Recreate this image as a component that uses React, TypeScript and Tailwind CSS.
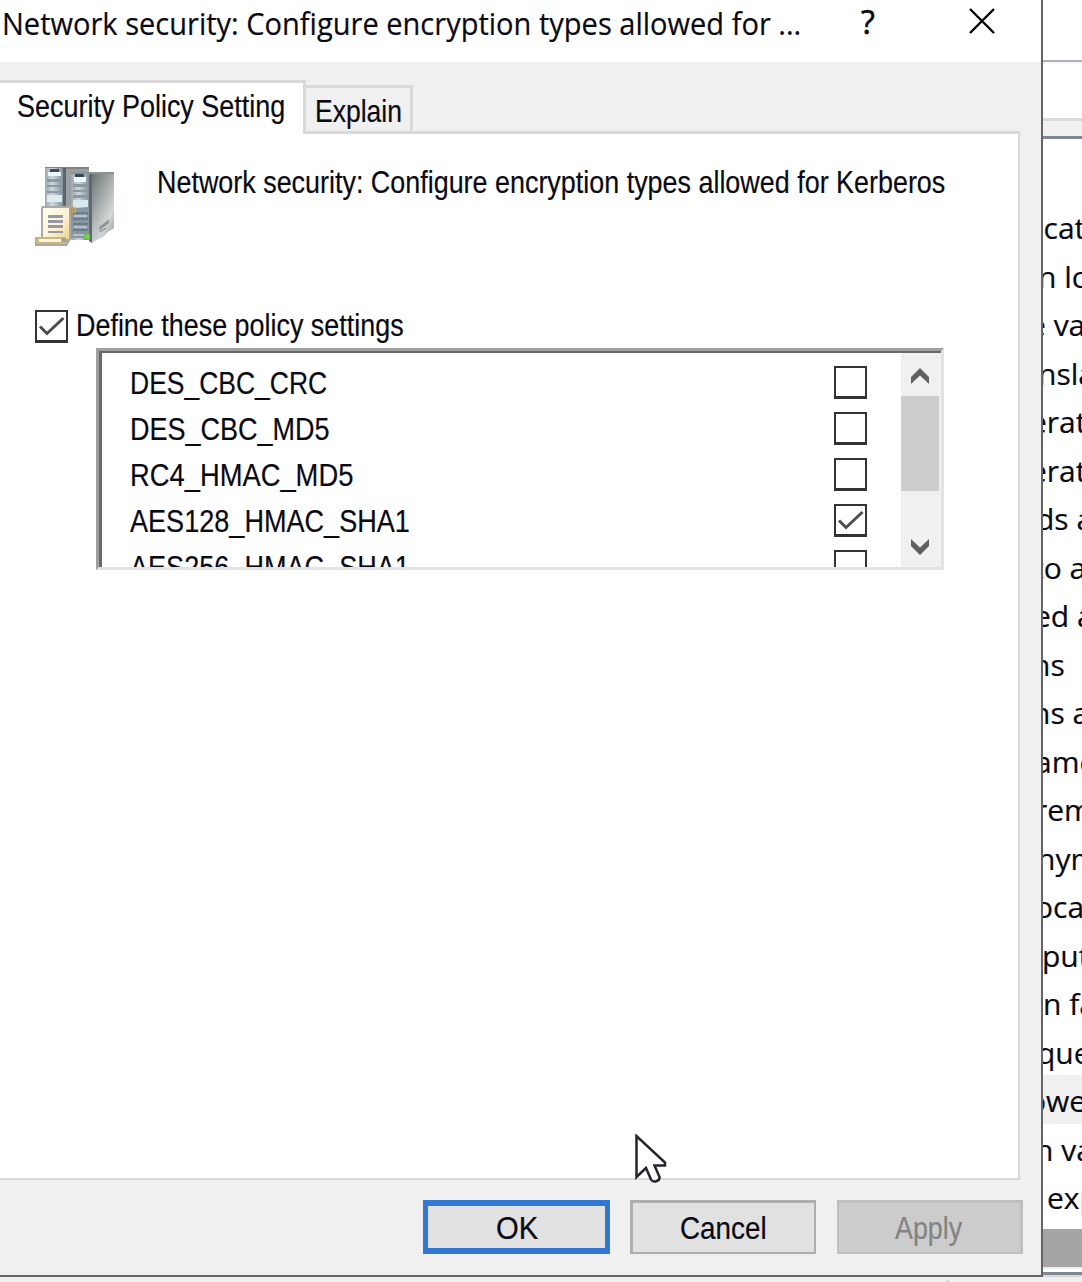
import React, { useLayoutEffect, useRef, useState } from "react";

/* Single-line label condensed horizontally to a given width. */
function Label({ text, width, className = "" }: { text: string; width: number; className?: string }) {
  const ref = useRef<HTMLSpanElement>(null);
  const [scale, setScale] = useState(1);
  useLayoutEffect(() => {
    if (ref.current) setScale(width / ref.current.offsetWidth);
  }, [text, width]);
  return (
    <span className={`block whitespace-pre ${className}`} style={{ width }}>
      <span ref={ref} className="inline-block origin-left" style={{ transform: `scaleX(${scale})` }}>
        {text}
      </span>
    </span>
  );
}

function CheckBox({ checked = false }: { checked?: boolean }) {
  return (
    <span className="block h-[33px] w-[33px] shrink-0 border-2 border-b-[3px] border-[#333] bg-white">
      {checked && (
        <svg viewBox="0 0 29 28" className="h-[28px] w-[29px]" fill="none">
          <path d="M3 14.5 L10 21.5 L26.5 6" stroke="#4d4d4d" strokeWidth="3" />
        </svg>
      )}
    </span>
  );
}

function ServerIcon() {
  return (
    <svg viewBox="0 0 79 79" className="h-[79px] w-[79px] shrink-0">
      <defs>
        <linearGradient id="side" x1="0" y1="0" x2="0.7" y2="1">
          <stop offset="0" stopColor="#68706f" />
          <stop offset="0.45" stopColor="#a3a9a9" />
          <stop offset="0.8" stopColor="#d5d7d7" />
          <stop offset="1" stopColor="#a9acac" />
        </linearGradient>
        <linearGradient id="face" x1="0" y1="0" x2="1" y2="0">
          <stop offset="0" stopColor="#9aa8b0" />
          <stop offset="0.4" stopColor="#cdd7dc" />
          <stop offset="1" stopColor="#84929b" />
        </linearGradient>
        <linearGradient id="paper" x1="0" y1="0" x2="1" y2="1">
          <stop offset="0" stopColor="#fffdf3" />
          <stop offset="0.55" stopColor="#fbf3d6" />
          <stop offset="1" stopColor="#eed58a" />
        </linearGradient>
      </defs>
      <path d="M10 0H54V40H10Z" fill="#7f8786" />
      <path d="M31 2H54V5H36V40H31Z" fill="#9aa09f" />
      <path d="M10 1H28V40H10Z" fill="url(#face)" />
      <path d="M28 1H31V40H28Z" fill="#59666e" />
      <path d="M15 2H24V5H15Z" fill="#3b4c54" />
      <path d="M13 5H26V9H13Z" fill="#eef7f9" />
      <path d="M12 12H27V15H12ZM12 18H27V20H12ZM12 24H27V26H12Z" fill="#8d98a0" />
      <path d="M12 28H27V35H12Z" fill="#dcecf0" />
      <path d="M56 5H79V61L73 65L68 70L62 73L56 76Z" fill="url(#side)" />
      <path d="M36 5H54V73H36Z" fill="url(#face)" />
      <path d="M54 5H57V76L54 74Z" fill="#5e6970" />
      <path d="M36 5H79V7H36Z" fill="#8b9493" />
      <path d="M40 7H49V10H40Z" fill="#344851" />
      <path d="M39 10H51V15H39Z" fill="#eef8fa" />
      <path d="M38 17H53V20H38ZM38 23H53V25H38ZM38 28H53V31H38Z" fill="#8c979f" />
      <path d="M38 33H53V40H38Z" fill="#d9e8ed" />
      <path d="M36 41H54V71H36Z" fill="#8997a3" />
      <path d="M38 45H53V47H38ZM38 51H53V53H38ZM38 56H53V58H38ZM38 62H53V64H38Z" fill="#6f7c8b" />
      <path d="M39 48H52V50H39ZM39 59H52V61H39ZM38 67H50V69H38Z" fill="#b5c1cb" />
      <path d="M49 67H55V73H49Z" fill="#72b45a" />
      <path d="M50 68H54V71H50Z" fill="#62ed14" />
      <path d="M64 60L74 52V56L64 64Z" fill="#999d9d" />
      <path d="M66 61L73 55M65 65L71 61" stroke="#8a9090" strokeWidth="1.4" />
      <path d="M7 39H38L41 42V46H36V72L32 79H0V70H6V41Z" fill="#aaa9a7" />
      <path d="M8 41H34V72H8Z" fill="url(#paper)" />
      <path d="M35 41H40V46H35Z" fill="#b29c66" />
      <path d="M13 48H28V51H13ZM13 53H28V56H13ZM13 58H28V61H13ZM13 64H28V66H13Z" fill="#9797a9" />
      <path d="M1 70H31V77H1Z" fill="#cbb57c" />
      <path d="M4 72H26V75H4Z" fill="#fff8df" />
      <path d="M27 71H31V75H27Z" fill="#a9a391" />
    </svg>
  );
}

function ScrollArrow({ down = false }: { down?: boolean }) {
  return (
    <svg viewBox="0 0 18 16" className={`h-4 w-[18px] ${down ? "rotate-180" : ""}`}>
      <path d="M9 0L18 9V16L9 7.5L0 16V9Z" fill="#606060" />
    </svg>
  );
}

const encryptionTypes = [
  { name: "DES_CBC_CRC", width: 197, checked: false },
  { name: "DES_CBC_MD5", width: 200, checked: false },
  { name: "RC4_HMAC_MD5", width: 223, checked: false },
  { name: "AES128_HMAC_SHA1", width: 280, checked: true },
  { name: "AES256_HMAC_SHA1", width: 280, checked: false },
];

/* Visible slice of the policy list behind the dialog: text and its horizontal shift. */
const policyRows = [
  { text: "icati", shift: "-ml-[7px]" },
  { text: "n loc", shift: "-ml-[5px]" },
  { text: "e val", shift: "-ml-[14px]" },
  { text: "nslat", shift: "-ml-[5px]" },
  { text: "erato", shift: "-ml-[13px]" },
  { text: "erato", shift: "-ml-[13px]" },
  { text: "ds an", shift: "-ml-[7px]" },
  { text: "to an", shift: "-ml-[10px]" },
  { text: "ed an", shift: "-ml-[9px]" },
  { text: "ns", shift: "-ml-[11px]" },
  { text: "ns an", shift: "-ml-[11px]" },
  { text: "ame", shift: "-ml-[8px]" },
  { text: "remo", shift: "-ml-[8px]" },
  { text: "nymo", shift: "-ml-[6px]" },
  { text: "ocal", shift: "-ml-[8px]" },
  { text: "pute", shift: "-ml-[1px]" },
  { text: "n fai", shift: "ml-0" },
  { text: "ques", shift: "-ml-[6px]" },
  { text: "owed", shift: "-ml-[15px]" },
  { text: "n val", shift: "-ml-[8px]" },
  { text: "expi", shift: "ml-[4px]" },
];

function TitleBar() {
  return (
    <div className="flex h-[62px] items-start bg-white font-['Open_Sans','Noto_Sans',sans-serif]">
      <Label text="Network security: Configure encryption types allowed for ..." width={799} className="ml-[2px] text-[31px] leading-[46px]" />
      <Label text="?" width={14} className="ml-[60px] text-[32px] leading-[43px] [-webkit-text-stroke:0.6px_currentColor]" />
      <svg viewBox="0 0 26 26" className="mt-2 ml-[94px] size-[26px]">
        <path d="M1 1L25 25M25 1L1 25" stroke="#000" strokeWidth="2.4" />
      </svg>
    </div>
  );
}

function Tabs() {
  return (
    <div className="relative z-10 flex h-[54px] items-start">
      <div className="h-[54px] w-[306px] border-t-[3px] border-r-[3px] border-[#d9d9d9] bg-white pl-[17px]">
        <Label text="Security Policy Setting" width={268} className="leading-[46px]" />
      </div>
      <div className="mt-[5px] h-[46px] w-[107px] border-t-[3px] border-r-[3px] border-[#d9d9d9] bg-[#f0f0f0] pl-[9px]">
        <Label text="Explain" width={87} className="leading-[46px]" />
      </div>
    </div>
  );
}

function EncryptionList() {
  return (
    <div className="ml-[96px] flex h-[222px] w-[848px] border-[3px] border-t-[#a0a0a0] border-r-[#e3e3e3] border-b-[#e3e3e3] border-l-[#a0a0a0]">
      <div className="flex h-full w-full overflow-hidden border-t-2 border-l-[3px] border-[#696969]">
        <div className="h-full flex-1 overflow-hidden pt-[7px]">
          {encryptionTypes.map((t) => (
            <div key={t.name} className="flex h-[46px] items-start justify-between pr-[34px] pl-[28px]">
              <Label text={t.name} width={t.width} className="leading-[46px]" />
              <div className="pt-[6px]">
                <CheckBox checked={t.checked} />
              </div>
            </div>
          ))}
        </div>
        <div className="flex h-full w-[40px] flex-col items-start bg-[#f0f0f0]">
          <div className="flex h-[43px] w-[38px] items-start justify-center pt-[15px]">
            <ScrollArrow />
          </div>
          <div className="h-[95px] w-[38px] bg-[#cdcdcd]" />
          <div className="flex w-[38px] flex-1 items-end justify-center pb-3">
            <ScrollArrow down />
          </div>
        </div>
      </div>
    </div>
  );
}

function Cursor() {
  return (
    <svg viewBox="0 0 32 50" className="absolute top-[1134px] left-[635px] z-20 h-[50px] w-8">
      <path d="M1.5 2V43L11 34L16 45.5C18 49 25 47.5 24.5 43L19.5 31.5H30V28.5Z" fill="#fff" stroke="#25252d" strokeWidth="2.5" />
    </svg>
  );
}

function Dialog() {
  return (
    <div className="flex h-[1277px] w-[1043px] shrink-0 flex-col border-r-2 border-b-2 border-[#656565] bg-[#f0f0f0]">
      <TitleBar />
      <div className="h-[18px]" />
      <Tabs />
      <div className="-mt-[3px] h-[1049px] w-[1020px] border-t-[3px] border-r-2 border-b-2 border-[#d9d9d9] bg-white">
        <div className="flex h-[176px] items-start pt-[33px] pl-[35px]">
          <ServerIcon />
          <Label text="Network security: Configure encryption types allowed for Kerberos" width={788} className="-mt-[8px] ml-[43px] leading-[46px]" />
        </div>
        <div className="flex h-[38px] items-start pl-[35px]">
          <CheckBox checked />
          <Label text="Define these policy settings" width={328} className="-mt-[8px] ml-[8px] leading-[46px]" />
        </div>
        <EncryptionList />
      </div>
      <div className="flex pt-5 pl-[423px]">
        <button className="flex h-[54px] w-[187px] justify-center border-x-[5px] border-y-[6px] border-[#3277d1] bg-[#e1e1e1]">
          <Label text="OK" width={42} className="-mt-px leading-[46px]" />
        </button>
        <button className="ml-5 flex h-[54px] w-[186px] justify-center border-2 border-t-[3px] border-l-[3px] border-[#adadad] bg-[#e1e1e1]">
          <Label text="Cancel" width={87} className="mt-[2px] -ml-px leading-[46px]" />
        </button>
        <button className="ml-[21px] flex h-[54px] w-[186px] justify-center border-2 border-t-[3px] border-r-[3px] border-[#bfbfbf] bg-[#ccc] text-[#838383]">
          <Label text="Apply" width={67} className="mt-[2px] -ml-[3px] leading-[46px]" />
        </button>
      </div>
    </div>
  );
}

function PolicyWindow() {
  return (
    <div className="flex h-[1277px] w-[39px] flex-col overflow-hidden bg-white">
      <div className="h-[60px] shrink-0" />
      <div className="h-[2px] shrink-0 bg-[#b0b0b0]" />
      <div className="h-[2px] shrink-0 bg-[#f7f7ff]" />
      <div className="h-[54px] shrink-0" />
      <div className="h-[3px] shrink-0 bg-[#dadada]" />
      <div className="h-[15px] shrink-0 bg-[#f0f0f0]" />
      <div className="h-[3px] shrink-0 bg-[#828790]" />
      <div className="h-[63px] shrink-0" />
      <div className="h-[1027px] shrink-0 font-['Open_Sans','Noto_Sans',sans-serif] text-[30px] leading-[51px]">
        {policyRows.map((r, i) => (
          <div key={i} className={`h-[48.5px] overflow-hidden whitespace-pre ${i === 18 ? "bg-[#f0f0f0]" : ""}`}>
            <span className={`block ${r.shift}`}>{r.text}</span>
          </div>
        ))}
      </div>
      <div className="h-[38px] shrink-0 bg-[#a5a5a5]" />
      <div className="h-[2px] shrink-0 bg-[#f0f0f0]" />
      <div className="h-[3px] shrink-0" />
      <div className="h-[3px] shrink-0 bg-[#828790]" />
      <div className="h-[2px] shrink-0 bg-[#dadada]" />
    </div>
  );
}

export default function App() {
  return (
    <div className="relative h-[1282px] w-[1082px] overflow-hidden bg-[#f0f0f0] font-['Liberation_Sans',Arial,sans-serif] text-[32px] text-[#0a0a14] [-webkit-text-stroke:0.2px_currentColor]">
      <div className="flex">
        <Dialog />
        <PolicyWindow />
      </div>
      <div className="mt-[3px] ml-[946px] h-[2px] w-[3px] bg-[#d9d9d9]" />
      <Cursor />
    </div>
  );
}
